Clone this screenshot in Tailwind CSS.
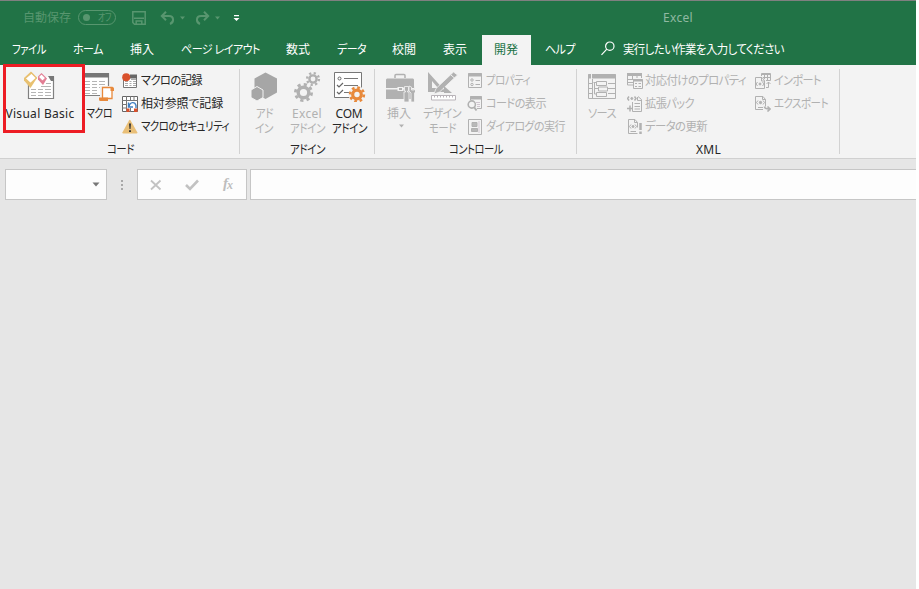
<!DOCTYPE html>
<html lang="ja">
<head>
<meta charset="utf-8">
<title>Excel</title>
<script src="https://cdn.jsdelivr.net/npm/@tailwindcss/browser@4"></script>
</head>
<body class="bg-white overflow-hidden">
<div id="app" class="relative w-[916px] h-[589px] bg-[#e6e6e6] overflow-hidden text-[12px] leading-[15px] text-[#262626] font-['Noto_Sans','Noto_Sans_CJK_JP',sans-serif] [font-feature-settings:'palt'] flex flex-col">
  <header class="bg-[#217346] border-t border-[#808080] h-[65px] text-white shrink-0">
    <div class="flex items-center h-[33px] pl-[23px] text-[#58966f]">
      <span data-w="48">自動保存</span>
      <div class="ml-[7px] w-[38px] h-[15px] rounded-full border border-[#58966f] flex items-center pl-[4px] gap-[8px] text-[10px] leading-[13px]"><i class="size-[7px] rounded-full bg-[#58966f]"></i><span data-w="13">オフ</span></div>
      <svg class="ml-[16px]" width="14" height="14" fill="none" stroke="#58966f" stroke-width="1.5"><path d="M.8.8h12.4v12.4H2.5L.8 11.5zM2 7.3h10M4.2 13V10h5.6v3"/></svg>
      <svg class="ml-[14px]" width="28" height="14" fill="none" stroke="#58966f" stroke-width="2"><path d="M6 .8 1.8 5 6 9.200M2 5h7c5 0 5.500 6 1 8"/><path d="M20 5.500h5l-2.500 3z" fill="#58966f" stroke="none"/></svg>
      <svg class="ml-[7px]" width="28" height="14" fill="none" stroke="#58966f" stroke-width="2"><path d="M9 .8 13.200 5 9 9.200M13 5H6C1 5 .500 11 5 13"/><path d="M20 5.500h5l-2.500 3z" fill="#58966f" stroke="none"/></svg>
      <svg class="ml-[10px]" width="7" height="8" fill="#fff"><path d="M1 1h5v1.300H1zM.500 4h6l-3 3z"/></svg>
      <span class="ml-[423px] text-[#90b9a2]" data-w="30">Excel</span>
    </div>
    <nav class="flex h-[31px] pt-px items-stretch leading-[29px]">
      <div class="w-[61px] pl-[12px]"><span data-w="34">ファイル</span></div>
      <div class="w-[57px] pl-[12px]"><span data-w="30">ホーム</span></div>
      <div class="w-[51px] pl-[12px]"><span data-w="24">挿入</span></div>
      <div class="w-[105px] pl-[12px]"><span data-w="79">ページ レイアウト</span></div>
      <div class="w-[51px] pl-[12px]"><span data-w="24">数式</span></div>
      <div class="w-[55px] pl-[12px]"><span data-w="29">データ</span></div>
      <div class="w-[51px] pl-[12px]"><span data-w="24">校閲</span></div>
      <div class="w-[51px] pl-[12px]"><span data-w="24">表示</span></div>
      <div class="w-[49px] pl-[12px] bg-[#f3f3f3] text-[#217346]"><span data-w="24">開発</span></div>
      <div class="w-[69px] pl-[14px]"><span data-w="30">ヘルプ</span></div>
      <svg class="mt-[6px] mr-[7px]" width="16" height="16" fill="none" stroke="#fff" stroke-width="1.200"><circle cx="9.800" cy="5.200" r="4.200"/><path d="M6.800 8.200 1.500 13.800"/></svg>
      <span data-w="161">実行したい作業を入力してください</span>
    </nav>
  </header>

  <main class="flex h-[94px] bg-[#f3f3f3] border-b border-[#d0d0d0] shrink-0">
    <section class="w-[240px] relative flex flex-col">
      <div class="flex h-[76px] pt-[4px]">
        <div class="w-[80px] flex flex-col items-center gap-[4px] pt-px">
          <svg width="40" height="32" viewBox="20 70 40 32" fill="none"><path d="M28.500 78v20.500h25V76.500" fill="#fff" stroke="#808080" stroke-width="1.200"/><path d="M48 76h6v5H51z" fill="#777"/><path d="M31 89.500h5m2 0h5m2 0h6M31 92.500h5m2 0h5m2 0h6M31 95.500h5m2 0h5m2 0h6M41 86.500h10M46 83.500h5" stroke="#b5b5b5"/><path d="m31 71.500 6 6.500-6.500 10-6.500-7.500V78z" fill="#e8c171"/><path d="m31.500 73 5 5-6 5.500-5.500-5z" fill="#fff" stroke="#e8c171" stroke-width="1.300"/><path d="M41.500 73 47 78.500l-4 6.500-5-5.500v-3z" fill="#e27e94"/><path d="m41.500 74 4 4-3 3-4-4z" fill="#fff" stroke="#e27e94"/></svg>
          <span data-w="69">Visual Basic</span>
        </div>
        <div class="w-[38px] flex flex-col items-center gap-[4px] pt-px">
          <svg width="32" height="32" viewBox="83 70 32 32" fill="none"><path d="M83.500 73.500h25v22h-25z" fill="#fff" stroke="#808080" stroke-width="1.200"/><path d="M83 73h26v4.500H83z" fill="#777"/><path d="M85 81.500h5m2 0h5m2 0h6M85 84.500h5m2 0h5m2 0h6M85 87.500h5m2 0h5m2 0h6M85 90.500h5m2 0h5M85 93.500h5m2 0h5" stroke="#b5b5b5"/><path d="M100 86h14v14h-14z" fill="#f3f3f3"/><path d="M102.500 98V87.500h9.500v11h-9" fill="#fff" stroke="#e8893b" stroke-width="1.300"/><path d="M99 97.500h9v3.500h-7.500q-1.500 0-1.500-1.500zM110.500 87h2q1.500 0 1.500 1.500V91h-3.500z" fill="#e8893b"/></svg>
          <span data-w="26">マクロ</span>
        </div>
        <div class="ml-[4px] flex flex-col">
          <div class="h-[23px] flex items-center gap-[3px]"><svg width="16" height="16" fill="none"><path d="M1.500 3.500h13v11h-13z" fill="#fff" stroke="#777"/><path d="M8 1.500h7v4H8z" fill="#666"/><path d="M3 8.500h3m1.500 0h2m1.500 0h3M3 10.500h3m1.500 0h2m1.500 0h3M3 12.500h3m1.500 0h2m1.500 0h3M9 6.500h5" stroke="#aaa"/><circle cx="4.200" cy="4.200" r="4" fill="#d9512c"/></svg><span data-w="61">マクロの記録</span></div>
          <div class="h-[23px] flex items-center gap-[3px]"><svg width="16" height="16" fill="none"><path d="M.500.500h15v15H.500z" fill="#fff" stroke="#666"/><path d="M4.500 0v16M8.500 0v4M12 0v4M0 4.500h16M0 8.500h4M0 12h4M8.500 12v4" stroke="#777"/><path d="M4.500 12.500h3V16h-3zM12 12.500h3.500V16H12z" fill="#d9512c"/><path d="M5 5h10v7H5z" fill="#fff"/><path d="M6.500 6.500V11H11M7 10.500c1-5 6-5 7-1v2.500" stroke="#3f7fc1" stroke-width="1.400"/></svg><span data-w="82">相対参照で記録</span></div>
          <div class="h-[23px] flex items-center gap-[3px]"><svg width="16" height="16"><path d="M7 1.500q.800-1.300 1.600 0l6.700 11.800q.300 1.200-.800 1.200H1.300q-1.100 0-.800-1.200z" fill="#e9bf77"/><path d="M7 4.500h2L8.500 10h-1zM7 11.200h2V13H7z" fill="#333"/></svg><span data-w="88">マクロのセキュリティ</span></div>
        </div>
      </div>
      <div class="text-center leading-[17px]"><span data-w="27">コード</span></div>
      <i class="absolute right-0 top-[4px] w-px h-[85px] bg-[#d2d2d2]"></i>
    </section>

    <section class="w-[135px] relative flex flex-col">
      <div class="flex h-[76px] pt-[4px]">
        <div class="w-[48px] flex flex-col items-center gap-[4px] pt-px text-[#b1b1b1]">
          <svg width="32" height="32" viewBox="248 70 32 32" fill="#a6a6a6"><path d="m265.500 72.500 11.500 6v14l-11.500 6.500-11-6.500v-14z"/><path d="m257 86.500 6 3.500v7.500l-6 3.500-6-3.500V90z" stroke="#f3f3f3"/></svg>
          <span data-w="17">アド</span><span class="-mt-[4px]" data-w="18">イン</span>
        </div>
        <div class="w-[38px] flex flex-col items-center gap-[4px] pt-px text-[#b1b1b1]">
          <svg width="32" height="32" viewBox="291 70 32 32" fill="none" stroke="#b1b1b1"><circle cx="303.500" cy="92.500" r="5.300" stroke-width="3.400"/><circle cx="303.500" cy="92.500" r="8.100" stroke-width="2.800" stroke-dasharray="3.200 3.160"/><circle cx="313" cy="79" r="3.600" stroke-width="2.400"/><circle cx="313" cy="79" r="5.900" stroke-width="2.400" stroke-dasharray="2.200 2.430"/></svg>
          <span data-w="30">Excel</span><span class="-mt-[4px]" data-w="35">アドイン</span>
        </div>
        <div class="w-[46px] flex flex-col items-center gap-[4px] pt-px">
          <svg width="34" height="32" viewBox="332 70 34 32" fill="none"><path d="M334.500 72.500h27v25h-27z" fill="#fff" stroke="#777"/><circle cx="339.500" cy="78.500" r="1.500" stroke="#666"/><path d="M344 78.500h14M344 85.500h14M344 92.500h6" stroke="#777"/><path d="m337 85 2 2 4-4M337 92l2 2 4-4" stroke="#666" stroke-width="1.200"/><circle cx="357" cy="94.500" r="8.500" fill="#f3f3f3"/><circle cx="357" cy="94.500" r="4.300" stroke="#e8893b" stroke-width="3.200"/><circle cx="357" cy="94.500" r="6.900" stroke="#e8893b" stroke-width="2.600" stroke-dasharray="2.700 2.719"/></svg>
          <span data-w="27">COM</span><span class="-mt-[4px]" data-w="35">アドイン</span>
        </div>
      </div>
      <div class="text-center leading-[17px]"><span data-w="35">アドイン</span></div>
      <i class="absolute right-0 top-[4px] w-px h-[85px] bg-[#d2d2d2]"></i>
    </section>

    <section class="w-[202px] relative flex flex-col">
      <div class="flex h-[76px] pt-[4px] text-[#b1b1b1]">
        <div class="w-[48px] flex flex-col items-center gap-[4px] pt-px">
          <svg width="32" height="32" viewBox="383 70 32 32" fill="#b1b1b1"><path d="M395 78v-2.500q0-1 1-1h8q1 0 1 1V78" fill="none" stroke="#b1b1b1" stroke-width="1.500"/><path d="M387 78.500h26l1 1V88h-28v-8.500zM386 89.500h28V99h-28z"/><path d="M397.500 87h6v4h-6z" fill="#f3f3f3"/><path d="M399 88h3v2h-3z"/><g stroke="#f3f3f3" stroke-width=".8"><path d="M404.500 86.500h4V91h-1v1h1.500v10h-5v-10h1.500v-1h-1z"/><path d="M409 86v5l2 2v9h3.500v-9l2-2v-5l-2 1v3h-3v-3z"/></g></svg>
          <span data-w="24">挿入</span><svg class="-mt-[1px] ml-[4px]" width="5" height="4" fill="#b1b1b1"><path d="M0 .500h5L2.500 3.500z"/></svg>
        </div>
        <div class="w-[38px] flex flex-col items-center gap-[4px] pt-px">
          <svg width="32" height="32" viewBox="426 70 32 32" fill="#b1b1b1"><path d="M428 72v20h18zM432 81l6 7h-6z" fill-rule="evenodd"/><path d="m453.500 72 4 3-18 17-5.500 2 2-5.500z" stroke="#f3f3f3" stroke-width=".8"/><path d="m451 75 4 3.500" stroke="#f3f3f3"/><path d="M444 86l8 7h-8z"/><path d="M431.500 95.500h24V100h-24zM434.500 95v2.500M437.500 95v2.500M440.500 95v2.500M443.500 95v2.500M446.500 95v2.500M449.500 95v2.500M452.500 95v2.500" fill="#fff" stroke="#b9b4b9"/></svg>
          <span data-w="38">デザイン</span><span class="-mt-[4px]" data-w="27">モード</span>
        </div>
        <div class="ml-[6px] flex flex-col">
          <div class="h-[23px] flex items-center gap-[3px]"><svg width="16" height="16" fill="none" stroke="#b1b1b1"><path d="M1.500.500h13v14h-13z"/><path d="M1 2h14" stroke-width="3"/><circle cx="5" cy="7" r="1.200"/><circle cx="5" cy="11.500" r="1.200"/><path d="M8.500 7.500H13M8.500 11.500H13"/></svg><span data-w="44">プロパティ</span></div>
          <div class="h-[23px] flex items-center gap-[3px]"><svg width="16" height="16" fill="none" stroke="#b1b1b1"><path d="M3.500 4V.500h11v12H10"/><path d="M3 2h12" stroke-width="3"/><path d="M9 6.500h4M10 8.500h3M10 10.500h3" stroke="#cfc5cf"/><circle cx="4.800" cy="8.500" r="3.600" stroke-width="1.600"/><path d="m7 11 2.500 3.500" stroke-width="2"/></svg><span data-w="60">コードの表示</span></div>
          <div class="h-[23px] flex items-center gap-[3px]"><svg width="16" height="16" fill="none" stroke="#b1b1b1"><path d="M1.500.500h13v15h-13z"/><path d="M5 3.500h5v4H5zM4.500 9.500h6v3h-6z" fill="#b9b9b9"/><path d="M12 2v12" stroke="#d5cbd5"/></svg><span data-w="79">ダイアログの実行</span></div>
        </div>
      </div>
      <div class="text-center leading-[17px]"><span data-w="54">コントロール</span></div>
      <i class="absolute right-0 top-[4px] w-px h-[85px] bg-[#d2d2d2]"></i>
    </section>

    <section class="w-[263px] relative flex flex-col">
      <div class="flex h-[76px] pt-[4px] text-[#b1b1b1]">
        <div class="w-[50px] flex flex-col items-center gap-[4px] pt-px">
          <svg width="32" height="32" viewBox="586 70 32 32" fill="none" stroke="#b1b1b1"><path d="M588.500 74.500h27v24h-27z"/><path d="M588 76.500h28" stroke-width="4"/><path d="M591.500 74v24" stroke="#f3f3f3"/><path d="M592.500 79v19M589 83.500h3M589 88.500h3M589 93.500h3M608 83.500h7M608 88.500h7M608 93.500h7M593.500 82.500h3M594.500 88.500h4M594.500 83v11h2"/><path d="M596.500 81.500h10v4h-10zM598.500 87h9v4h-9zM596.500 92.500h10v4h-10z" fill="#f3f3f3"/></svg>
          <span data-w="28">ソース</span>
        </div>
        <div class="w-[128px] flex flex-col">
          <div class="h-[23px] flex items-center gap-[2px]"><svg width="16" height="16" fill="none" stroke="#b1b1b1"><path d="M6 12H.500V.500h14V5"/><path d="M0 1.500h15" stroke-width="3"/><path d="M5.500 3v3M10 3v2M1 6.500h6M1 9.500h5"/><path d="M6.500 6.500h9v9h-9z" fill="#f3f3f3"/><path d="M6 7.500h10" stroke-width="2"/><path d="M8 10.500h2M11.500 10.500H14M8 13.500h2M11.500 13.500H14"/></svg><span data-w="101">対応付けのプロパティ</span></div>
          <div class="h-[23px] flex items-center gap-[2px]"><svg width="16" height="16" fill="none" stroke="#b1b1b1"><path d="M5.500 6v9.500h9v-12L11 .500M10.500 1v3.500H14M7.500 7.500H13M7.500 10.500H13M7.500 13H13"/><path d="M2 .500.500 2.500 2 4.500M7.500.500 9 2.500l-1.500 2M0 12.500h6M3 9.500v6" stroke-width="1.500"/><circle cx="4.800" cy="2.500" r="1" fill="#b1b1b1"/></svg><span data-w="49">拡張パック</span></div>
          <div class="h-[23px] flex items-center gap-[2px]"><svg width="16" height="16" fill="none" stroke="#b1b1b1"><path d="M10.500 14.500h-9V.500H8l2.500 3v5M7.500.500v3h3"/><path d="M4 5.500 2.500 7.500 4 9.500M8 5.500l1.500 2L8 9.500M3.500 12.500H9"/><circle cx="6" cy="7.500" r="1" fill="#b1b1b1"/><path d="M13.500 4v7M13.500 12.500V15" stroke-width="2.500"/></svg><span data-w="62">データの更新</span></div>
        </div>
        <div class="flex flex-col">
          <div class="h-[23px] flex items-center gap-[3px]"><svg width="16" height="16" fill="none" stroke="#b1b1b1"><path d="M9.500 15.500h-9V4.500H7l2.500 3zM6.500 5v3h3M6.500 3V.500h9v7H11M7 1.500h8M9.500 2v4M12.500 2v5M8 4.500h7"/><path d="M2.500 9 1 11l1.500 2M7.500 9 9 11l-1.500 2M11 14.500h2.500V9M11.500 11l2-2 2 2"/><circle cx="5" cy="11" r="1" fill="#b1b1b1"/></svg><span data-w="47">インポート</span></div>
          <div class="h-[23px] flex items-center gap-[3px]"><svg width="16" height="16" fill="none" stroke="#b1b1b1"><path d="M8 13.500H.500V.500H8l2.500 3v7M7.500.500v3h3"/><path d="M3 4.500 1.500 6.500 3 8.500M8 4.500l1.500 2L8 8.500M3 11.500h5"/><circle cx="5.500" cy="6.500" r="1.200" fill="#b1b1b1"/><path d="M9.500 10.500q0 2.500 5 2.500M12.500 10.500l2.500 2.500-2.500 2.500" stroke-width="1.600"/></svg><span data-w="54">エクスポート</span></div>
        </div>
      </div>
      <div class="text-center leading-[17px]"><span data-w="25">XML</span></div>
      <i class="absolute right-0 top-[4px] w-px h-[85px] bg-[#d2d2d2]"></i>
    </section>
  </main>

  <div class="flex mt-[10px] h-[31px] pl-[5px]">
    <div class="w-[102px] border border-[#c6c6c6] bg-[#fdfdfd] flex items-center justify-end pr-[6px]"><svg width="8" height="5" fill="#777"><path d="M.500.500h7L4 4.500z"/></svg></div>
    <div class="w-[30px] flex flex-col items-center justify-center gap-[2px]"><i class="size-[2px] bg-[#a8a8a8]"></i><i class="size-[2px] bg-[#a8a8a8]"></i><i class="size-[2px] bg-[#a8a8a8]"></i></div>
    <div class="w-[110px] border border-[#c6c6c6] bg-[#fdfdfd] flex items-center pl-[12px]">
      <svg width="12" height="12" fill="none" stroke="#c2c2c2" stroke-width="1.800"><path d="m1 1.500 9.500 9M10.500 1.500 1 10.500"/></svg>
      <svg class="ml-[23px]" width="14" height="12" fill="none" stroke="#c2c2c2" stroke-width="2.600"><path d="m1 6 4 4 8-8.500"/></svg>
      <span class="ml-[24px] -mt-[3px] font-['Liberation_Serif',serif] italic font-bold text-[15px] text-[#bdbdbd]">f<sub class="text-[12px] -ml-px bottom-[-1px]">x</sub></span>
    </div>
    <div class="ml-[3px] flex-1 border border-r-0 border-[#c6c6c6] bg-[#fdfdfd]"></div>
  </div>

  <div class="absolute left-[3px] top-[64px] w-[82px] h-[69px] border-[3px] border-[#ed1c24]"></div>
</div>
<script>
// Fit each label to its data-w width: letter spacing takes up to 0.6px per
// glyph, horizontal scaling takes the rest.
function fitLabels() {
  document.querySelectorAll('[data-w]').forEach(el => {
    const s = el.style, w = +el.dataset.w, n = el.textContent.length;
    s.display = 'inline-block';
    s.whiteSpace = 'nowrap';
    s.textAlign = 'left';
    s.flexShrink = 0;
    s.width = 'auto';
    s.letterSpacing = '0px';
    s.transform = 'none';
    const range = document.createRange();
    range.selectNodeContents(el);
    const natural = range.getBoundingClientRect().width;
    const ls = Math.max(-0.6, Math.min(0.6, (w - natural) / n));
    s.letterSpacing = ls + 'px';
    s.width = w + 'px';
    s.transformOrigin = '0 50%';
    s.transform = 'scaleX(' + w / (natural + ls * n) + ')';
  });
}
fitLabels();
window.addEventListener('load', fitLabels);
document.fonts.ready.then(fitLabels);
new ResizeObserver(fitLabels).observe(document.getElementById('app'));
</script>
</body>
</html>
